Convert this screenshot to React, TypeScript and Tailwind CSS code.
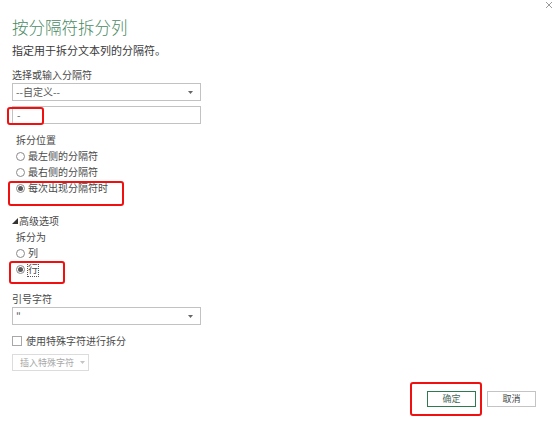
import React from "react";

const font = { fontFamily: '"Noto Sans CJK SC", "Noto Sans", sans-serif' };

function Caret({ color = "#555" }: { color?: string }) {
  return (
    <svg width="5" height="3" viewBox="0 0 5 3" className="block">
      <path d="M0 0 L5 0 L2.5 3 Z" fill={color} />
    </svg>
  );
}

function Radio({ checked, label, focus }: { checked?: boolean; label: string; focus?: boolean }) {
  return (
    <div className="flex items-center h-[16px] pl-[16px]">
      <span className="w-[9px] h-[9px] rounded-full border border-[#8a8a8a] bg-white flex items-center justify-center">
        {checked && <span className="w-[5px] h-[5px] rounded-full bg-[#5a5a5a]" />}
      </span>
      <span
        className={
          "ml-[3px] text-[10px] leading-[14px] text-[#4a4a4a] " +
          (focus ? "outline outline-1 outline-dotted outline-[#555] outline-offset-0" : "")
        }
      >
        {label}
      </span>
    </div>
  );
}

function Select({ value }: { value: string }) {
  return (
    <div className="w-[189px] h-[18px] border border-[#c2c2c2] bg-white flex items-center justify-between pl-[3px] pr-[7px]">
      <span className="text-[10px] leading-[14px] text-[#555]">{value}</span>
      <Caret color="#666" />
    </div>
  );
}

export default function App() {
  return (
    <div className="relative w-[553px] h-[428px] bg-white overflow-hidden" style={font}>
      {/* close glyph */}
      <svg className="absolute left-[545px] top-[1px]" width="8" height="8" viewBox="0 0 8 8">
        <path d="M1 1 L7 7 M7 1 L1 7" stroke="#9a9a9a" strokeWidth="1" />
      </svg>

      <div className="flex flex-col pl-[12px]">
        <div className="mt-[16px] h-[22px] leading-[22px] text-[16.5px] font-light text-[#4a8a64]">按分隔符拆分列</div>
        <div className="mt-[5px] h-[14px] leading-[14px] text-[11px] text-[#3a3a3a]">指定用于拆分文本列的分隔符。</div>

        <div className="mt-[11px] h-[14px] leading-[14px] text-[10px] text-[#4a4a4a]">选择或输入分隔符</div>
        <div className="mt-[1px]">
          <Select value="--自定义--" />
        </div>
        <div className="mt-[5px] w-[189px] h-[18px] border border-[#c2c2c2] bg-white flex items-center pl-[4px]">
          <span className="text-[10px] leading-[14px] text-[#555]">-</span>
        </div>

        <div className="mt-[9px] pl-[4px] h-[14px] leading-[14px] text-[10px] text-[#4a4a4a]">拆分位置</div>
        <div className="mt-[1px] -ml-[12px] flex flex-col">
          <Radio label="最左侧的分隔符" />
          <Radio label="最右侧的分隔符" />
          <Radio label="每次出现分隔符时" checked />
        </div>

        <div className="mt-[18px] h-[14px] flex items-center">
          <svg width="6" height="6" viewBox="0 0 6 6" className="block">
            <path d="M6 0 L6 6 L0 6 Z" fill="#333" />
          </svg>
          <span className="ml-[1px] text-[10px] leading-[14px] text-[#4a4a4a]">高级选项</span>
        </div>
        <div className="mt-[2px] pl-[4px] h-[14px] leading-[14px] text-[10px] text-[#4a4a4a]">拆分为</div>
        <div className="mt-[1px] -ml-[12px] flex flex-col">
          <Radio label="列" />
          <Radio label="行" checked focus />
        </div>

        <div className="mt-[15px] h-[14px] leading-[14px] text-[10px] text-[#4a4a4a]">引号字符</div>
        <div className="mt-[1px]">
          <Select value={'"'} />
        </div>

        <div className="mt-[9px] h-[14px] flex items-center">
          <span className="w-[10px] h-[10px] border border-[#a8a8a8] bg-white" />
          <span className="ml-[4px] text-[10px] leading-[14px] text-[#4a4a4a]">使用特殊字符进行拆分</span>
        </div>
        <div className="mt-[6px] w-[77px] h-[17px] border border-[#dcdcdc] bg-white flex items-center pl-[7px] gap-[6px]">
          <span className="text-[9px] leading-[12px] text-[#a8a8a8]">插入特殊字符</span>
          <Caret color="#c4c4c4" />
        </div>
      </div>

      <div className="flex justify-end gap-[11px] pr-[17px] mt-[20px]">
        <button className="w-[49px] h-[16px] border border-[#2e7a4f] bg-white text-[9px] leading-[12px] text-[#4a6b5a]">
          确定
        </button>
        <button className="w-[49px] h-[16px] border border-[#c4c4c4] bg-white text-[9px] leading-[12px] text-[#444]">
          取消
        </button>
      </div>

      {/* red annotation boxes */}
      <div className="absolute left-[7px] top-[107px] w-[37px] h-[18px] border-[2.5px] border-[#f01010] rounded-[3px]" />
      <div className="absolute left-[8px] top-[181px] w-[116px] h-[25px] border-[2.5px] border-[#f01010] rounded-[3px]" />
      <div className="absolute left-[9px] top-[261px] w-[56px] h-[23px] border-[2.5px] border-[#f01010] rounded-[3px]" />
      <div className="absolute left-[410px] top-[382px] w-[72px] h-[34px] border-[2.5px] border-[#f01010] rounded-[3px]" />
    </div>
  );
}
